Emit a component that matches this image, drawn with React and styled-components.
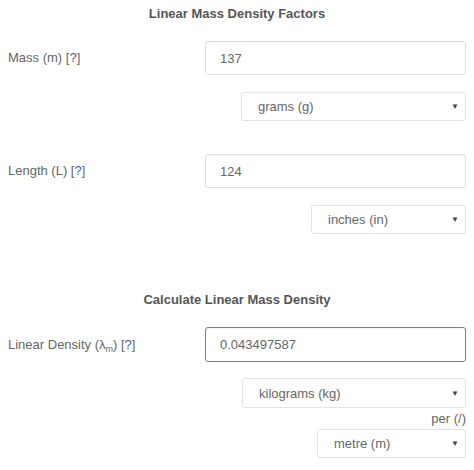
import React from "react";
import styled, { createGlobalStyle } from "styled-components";

const GlobalStyle = createGlobalStyle`
  body {
    margin: 0;
    background: #fff;
    font-family: "Liberation Sans", Arial, sans-serif;
    font-size: 13px;
    color: #666;
  }
`;

const Page = styled.div`
  width: 458px;
  padding: 0 8px;
  display: flex;
  flex-direction: column;
`;

const Title = styled.div`
  margin-top: ${(p) => p.top}px;
  text-align: center;
  font-weight: 700;
  line-height: 20px;
  color: #555;
`;

const Row = styled.div`
  display: flex;
  align-items: center;
  margin-top: ${(p) => p.top}px;
`;

const Label = styled.div`
  width: 197px;
  line-height: 20px;
  color: #666;
`;

const Help = styled.span`
  color: #4455a8;
`;

const Sub = styled.sub`
  font-size: 9px;
  vertical-align: -3px;
  line-height: 0;
`;

const Input = styled.div`
  flex: 1;
  box-sizing: border-box;
  height: ${(p) => p.h}px;
  display: flex;
  align-items: center;
  padding-left: 14px;
  border: 1px solid ${(p) => (p.error ? "#c46060" : "#dedede")};
  border-radius: 3px;
  box-shadow: inset 0 1px 1px rgba(0, 0, 0, 0.04);
  color: #666;
`;

const SelectRow = styled.div`
  display: flex;
  justify-content: flex-end;
  margin-top: ${(p) => p.top}px;
`;

const Select = styled.div`
  box-sizing: border-box;
  width: ${(p) => p.w}px;
  height: ${(p) => p.h}px;
  display: flex;
  align-items: center;
  justify-content: space-between;
  padding: 0 6px 0 16px;
  border: 1px solid #e2e2e2;
  border-radius: 3px;
  color: #666;
`;

const Arrow = styled.span`
  font-size: 8px;
  color: #444;
`;

const Per = styled.div`
  margin-top: 1px;
  text-align: right;
  line-height: 20px;
  color: #666;
`;

const UnitSelect = ({ top, w, h = 29, children }) => (
  <SelectRow top={top}>
    <Select w={w} h={h}>
      <span>{children}</span>
      <Arrow>▼</Arrow>
    </Select>
  </SelectRow>
);

export default function App() {
  return (
    <>
      <GlobalStyle />
      <Page>
        <Title top={4}>Linear Mass Density Factors</Title>
        <Row top={17}>
          <Label>
            Mass (m) [<Help>?</Help>]
          </Label>
          <Input h={34}>137</Input>
        </Row>
        <UnitSelect top={17} w={225}>grams (g)</UnitSelect>

        <Row top={33}>
          <Label>
            Length (L) [<Help>?</Help>]
          </Label>
          <Input h={34}>124</Input>
        </Row>
        <UnitSelect top={17} w={155}>inches (in)</UnitSelect>

        <Title top={56}>Calculate Linear Mass Density</Title>
        <Row top={17}>
          <Label>
            Linear Density (λ<Sub>m</Sub>) [<Help>?</Help>]
          </Label>
          <Input h={35} error>
            0.043497587
          </Input>
        </Row>
        <UnitSelect top={16} w={224} h={30}>kilograms (kg)</UnitSelect>
        <Per>per (/)</Per>
        <UnitSelect top={0} w={149}>metre (m)</UnitSelect>
      </Page>
    </>
  );
}
